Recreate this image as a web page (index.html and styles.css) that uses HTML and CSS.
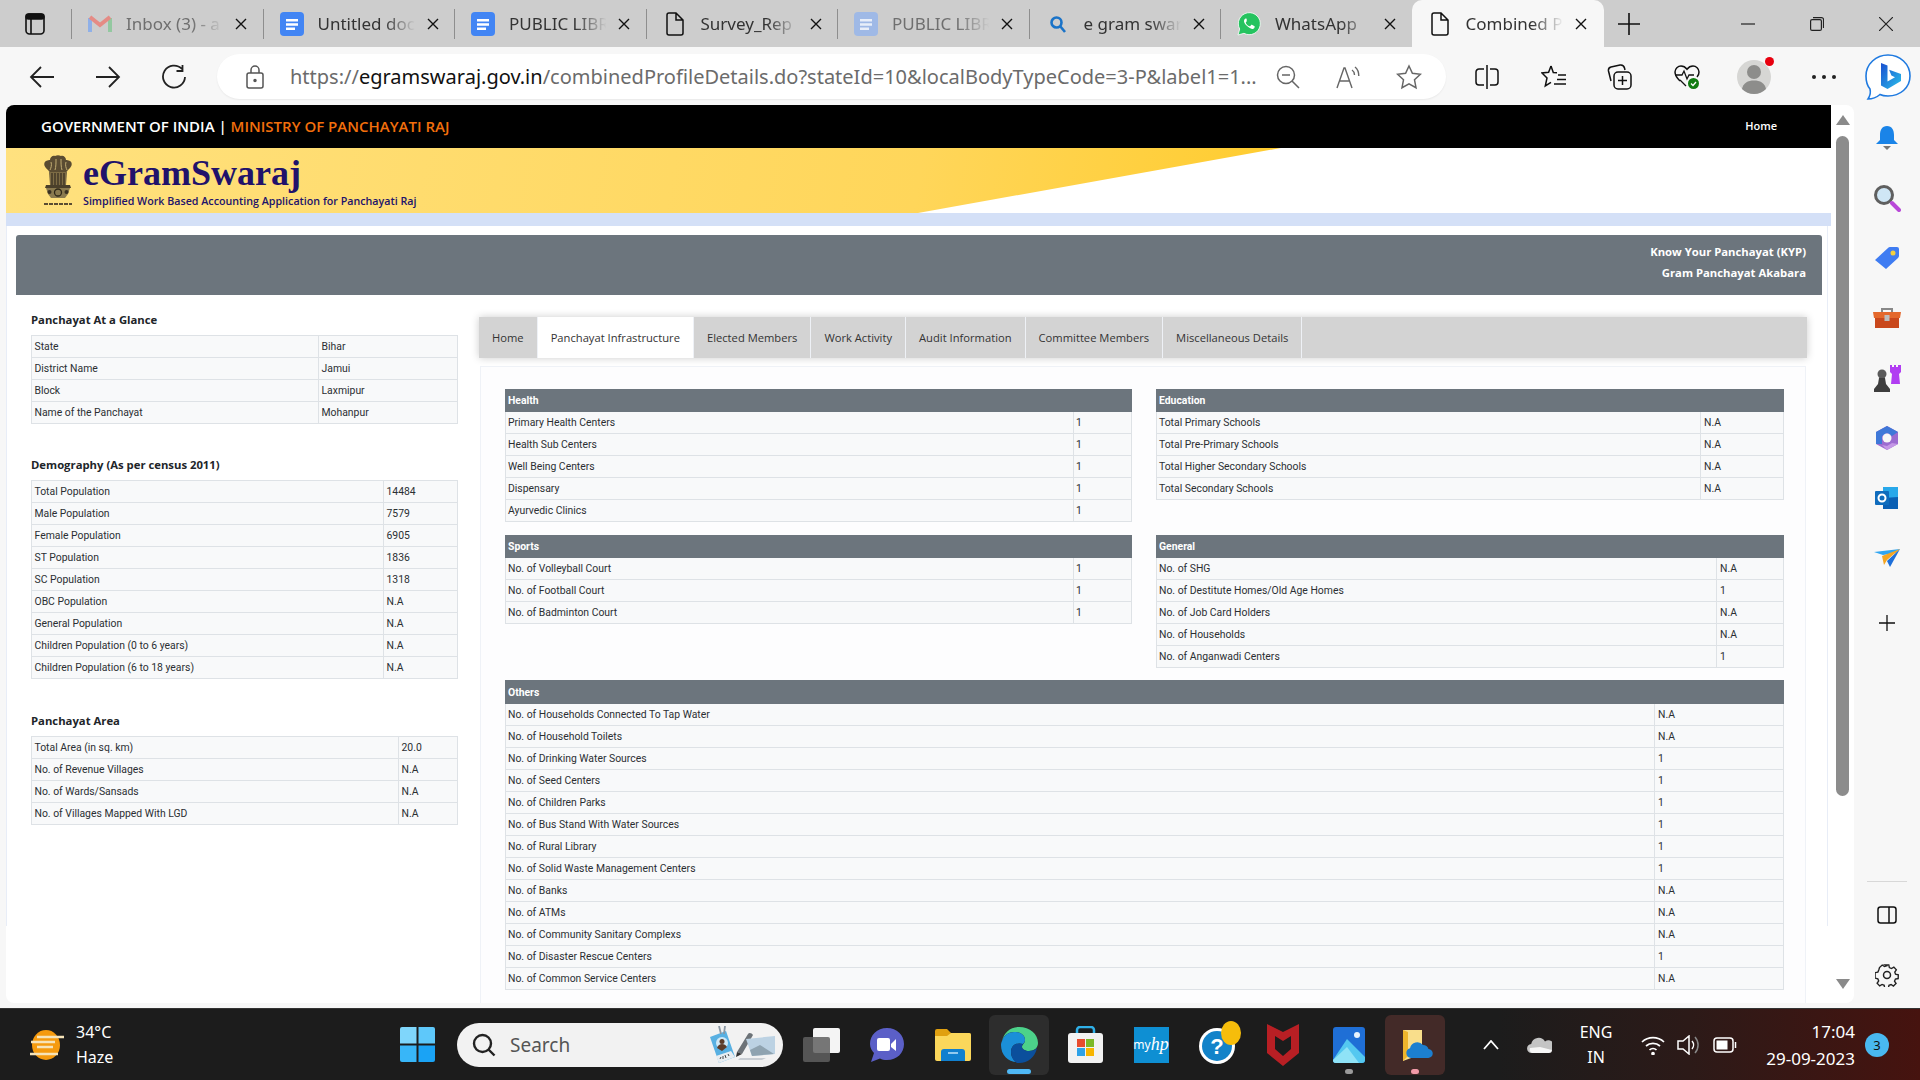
FILE: index.html
```html
<!DOCTYPE html>
<html lang="en">

<head>
    <meta charset="UTF-8">
    <meta name="viewport" content="width=device-width, initial-scale=1.0">
    <title>Combined Profile</title>
    <link rel="icon" href="data:,">
    <link rel="stylesheet" href="styles.css">
</head>

<body>
    <!-- browser tabs -->
    <div class="tabbar">
        <div class="tab-sidebtn">
            <svg width="20" height="24" viewBox="0 0 20 24" fill="none" stroke="#111" stroke-width="1.6"><rect x="1" y="2" width="18" height="20" rx="3.5"/><rect x="1" y="2" width="18" height="5" rx="2.5" fill="#111"/><path d="M6 7v15"/></svg>
        </div>
        <div class="tabs">
            <div class="tab tab-dim">
                <span class="favicon"><svg width="24" height="20" viewBox="0 0 24 20" fill="none"><path d="M2 18V4" stroke="#8fb0e8" stroke-width="4"/><path d="M22 18V4" stroke="#93c8a0" stroke-width="4"/><path d="M2 3l10 8 10-8" stroke="#e58b85" stroke-width="4"/></svg></span>
                <span class="tab-title">Inbox (3) - a</span>
                <svg class="tab-close" viewBox="0 0 12 12"><path d="M1 1l10 10M11 1L1 11"/></svg>
            </div>
            <div class="tab">
                <span class="favicon"><svg width="24" height="24" viewBox="0 0 24 24"><rect width="24" height="24" rx="4" fill="#4285f4"/><path d="M6 7h12v2.5H6zM6 11.2h12v2.5H6zM6 15.4h9v2.5H6z" fill="#fff"/></svg></span>
                <span class="tab-title">Untitled doc</span>
                <svg class="tab-close" viewBox="0 0 12 12"><path d="M1 1l10 10M11 1L1 11"/></svg>
            </div>
            <div class="tab">
                <span class="favicon"><svg width="24" height="24" viewBox="0 0 24 24"><rect width="24" height="24" rx="4" fill="#4285f4"/><path d="M6 7h12v2.5H6zM6 11.2h12v2.5H6zM6 15.4h9v2.5H6z" fill="#fff"/></svg></span>
                <span class="tab-title">PUBLIC LIBR</span>
                <svg class="tab-close" viewBox="0 0 12 12"><path d="M1 1l10 10M11 1L1 11"/></svg>
            </div>
            <div class="tab">
                <span class="favicon"><svg width="18" height="24" viewBox="0 0 18 24" fill="none" stroke="#111" stroke-width="1.5"><path d="M1 3a2 2 0 0 1 2-2h7l7 7v13a2 2 0 0 1-2 2H3a2 2 0 0 1-2-2zM10 1v7h7"/></svg></span>
                <span class="tab-title">Survey_Rep</span>
                <svg class="tab-close" viewBox="0 0 12 12"><path d="M1 1l10 10M11 1L1 11"/></svg>
            </div>
            <div class="tab tab-dim">
                <span class="favicon"><svg width="24" height="24" viewBox="0 0 24 24"><rect width="24" height="24" rx="4" fill="#9fb9e6"/><path d="M6 7h12v2.5H6zM6 11.2h12v2.5H6zM6 15.4h9v2.5H6z" fill="#e8eef9"/></svg></span>
                <span class="tab-title">PUBLIC LIBR</span>
                <svg class="tab-close" viewBox="0 0 12 12"><path d="M1 1l10 10M11 1L1 11"/></svg>
            </div>
            <div class="tab">
                <span class="favicon"><svg width="18" height="18" viewBox="0 0 18 18" fill="none" stroke="#1a73c8" stroke-width="2.6"><circle cx="7.5" cy="7.5" r="5"/><path d="M11 11l5 6"/></svg></span>
                <span class="tab-title">e gram swar</span>
                <svg class="tab-close" viewBox="0 0 12 12"><path d="M1 1l10 10M11 1L1 11"/></svg>
            </div>
            <div class="tab">
                <span class="favicon"><svg width="24" height="24" viewBox="0 0 24 24"><path d="M1 23l1.7-6A11 11 0 1 1 7 21.3z" fill="#25c35f" stroke="#fff" stroke-width=".8"/><path d="M8.6 6.6c-.5 0-1.6 1-1.6 2.600s1.700 3.700 3.700 5.400 4 2.500 5 2.300 2-1.200 2-2-.1-.8-.5-1l-2.300-1.100c-.4-.1-.6 0-.8.300l-.9 1.100c-.2.200-.4.200-.7.100-1.800-.8-3-2.100-3.700-3.400-.1-.3 0-.5.200-.7l.7-.9c.1-.2.200-.4 0-.7L9.700 7c-.2-.4-.6-.4-1.100-.4z" fill="#fff"/></svg></span>
                <span class="tab-title">WhatsApp</span>
                <svg class="tab-close" viewBox="0 0 12 12"><path d="M1 1l10 10M11 1L1 11"/></svg>
            </div>
            <div class="tab tab-active">
                <span class="favicon"><svg width="18" height="24" viewBox="0 0 18 24" fill="none" stroke="#111" stroke-width="1.5"><path d="M1 3a2 2 0 0 1 2-2h7l7 7v13a2 2 0 0 1-2 2H3a2 2 0 0 1-2-2zM10 1v7h7"/></svg></span>
                <span class="tab-title">Combined P</span>
                <svg class="tab-close" viewBox="0 0 12 12"><path d="M1 1l10 10M11 1L1 11"/></svg>
            </div>
        </div>
        <svg class="tab-new" width="22" height="22" viewBox="0 0 22 22" stroke="#111" stroke-width="1.6"><path d="M11 0v22M0 11h22"/></svg>
        <div class="winbtns">
            <svg width="14" height="14" viewBox="0 0 14 14" stroke="#222" stroke-width="1.2"><path d="M0 7h14"/></svg>
            <svg width="14" height="14" viewBox="0 0 14 14" fill="none" stroke="#222" stroke-width="1.2"><rect x=".6" y="2.600" width="10.800" height="10.800" rx="1.500"/><path d="M3 .6h8.500a2 2 0 0 1 2 2V11"/></svg>
            <svg width="14" height="14" viewBox="0 0 14 14" stroke="#222" stroke-width="1.2"><path d="M0 0l14 14M14 0L0 14"/></svg>
        </div>
    </div>

    <!-- address bar -->
    <div class="toolbar">
        <div class="navbtns">
            <div class="toolbtn"><svg width="26" height="24" viewBox="0 0 26 24" fill="none" stroke="#222" stroke-width="1.8"><path d="M25 12H2M12 2L2 12l10 10"/></svg></div>
            <div class="toolbtn"><svg width="26" height="24" viewBox="0 0 26 24" fill="none" stroke="#222" stroke-width="1.8"><path d="M1 12h23M14 2l10 10-10 10"/></svg></div>
            <div class="toolbtn"><svg width="26" height="26" viewBox="0 0 26 26" fill="none" stroke="#222" stroke-width="1.8"><path d="M21 5a11 11 0 1 0 3 8M21.500 1v6h-6"/></svg></div>
        </div>
        <div class="addressbar">
            <svg class="lock" width="18" height="24" viewBox="0 0 18 24" fill="none" stroke="#555" stroke-width="1.500"><rect x="1" y="8" width="16" height="15" rx="2"/><path d="M5 8V5a4 4 0 0 1 8 0v3"/><circle cx="9" cy="15.500" r="1" fill="#555"/></svg>
            <div class="url"><span>https://</span><b>egramswaraj.gov.in</b><span>/combinedProfileDetails.do?stateId=10&amp;localBodyTypeCode=3-P&amp;label1=1...</span></div>
            <svg class="addr-icon" width="24" height="24" viewBox="0 0 24 24" fill="none" stroke="#666" stroke-width="1.500"><circle cx="10" cy="10" r="8.500"/><path d="M6 10h8M16 16l7 7"/></svg>
            <svg class="addr-icon" width="24" height="24" viewBox="0 0 24 24" fill="none" stroke="#666" stroke-width="1.400"><path d="M1 23L8 3h1l7 20M4 16h10M16 5c1.500 1 2.500 3 2.500 5M19 2c2.500 2 3.800 5 3.800 9"/></svg>
            <svg class="addr-icon" width="26" height="26" viewBox="0 0 26 26" fill="none" stroke="#666" stroke-width="1.500"><path d="M13 2l3.400 7.300 8 1-5.900 5.500 1.500 7.900-7-3.900-7 3.900 1.500-7.900L1.600 10.300l8-1z"/></svg>
        </div>
        <div class="toolbtns">
            <div class="toolbtn"><svg width="24" height="24" viewBox="0 0 24 24" fill="none" stroke="#111" stroke-width="1.500"><path d="M12 0v24M9 4H4a3 3 0 0 0-3 3v10a3 3 0 0 0 3 3h5M15 4h5a3 3 0 0 1 3 3v10a3 3 0 0 1-3 3h-5"/></svg></div>
            <div class="toolbtn"><svg width="26" height="26" viewBox="0 0 26 26" fill="none" stroke="#111" stroke-width="1.500"><path d="M10 2l2.300 6.500 3.700.3M10 2L7.600 8.300 1 9l5 5-1.700 8 5.700-3.600M17 11h8M16 15.500h9M13 20h12"/></svg></div>
            <div class="toolbtn"><svg width="26" height="26" viewBox="0 0 26 26" fill="none" stroke="#111" stroke-width="1.500"><path d="M4 17L1.500 7A3.500 3.500 0 0 1 4 3l9-2a4 4 0 0 1 4.500 3l.5 2"/><rect x="7" y="8" width="17" height="17" rx="4"/><path d="M15.500 12v9M11 16.500h9"/></svg></div>
            <div class="toolbtn"><svg width="26" height="26" viewBox="0 0 26 26" fill="none"><path d="M6 17C3 14 1 12 1 8c0-3.500 3-6 6-6 2.600 0 4.500 1.300 6 3.200C14.500 3.300 16.400 2 19 2c3 0 6 2.500 6 6 0 2-1 4-2 5" stroke="#111" stroke-width="1.500"/><path d="M1 11h7l2-4 3 8 2-4h5M6 16l6 6" stroke="#111" stroke-width="1.300"/><circle cx="19.500" cy="19.500" r="5.500" fill="#107c10"/><path d="M17 19.500l2 2 3-3.500" stroke="#fff" stroke-width="1.300"/></svg></div>
            <div class="toolbtn avatar-btn">
                <span class="avatar"><svg width="34" height="34" viewBox="0 0 34 34"><circle cx="17" cy="17" r="17" fill="#d6d6d4"/><circle cx="17" cy="12" r="7" fill="#8d8d8b"/><path d="M5 29c1-6 6-8.500 12-8.500S28 23 29 29a17 17 0 0 1-24 0z" fill="#8d8d8b"/></svg></span>
                <span class="avatar-dot"></span>
            </div>
            <div class="toolbtn dots"><svg width="24" height="4" viewBox="0 0 24 4" fill="#222"><circle cx="2" cy="2" r="2"/><circle cx="12" cy="2" r="2"/><circle cx="22" cy="2" r="2"/></svg></div>
        </div>
        <svg class="bing" width="46" height="46" viewBox="0 0 46 46">
            <defs>
                <linearGradient id="bingB" x1="0" y1="0" x2="1" y2="1"><stop offset="0" stop-color="#1a4fd0"/><stop offset="1" stop-color="#2bc0ea"/></linearGradient>
            </defs>
            <path d="M23 1c12 0 22 9 22 21s-10 20-22 20c-3 0-6-.5-8-1.500C12 43 8 45 3 45c2-3 3-6 2-10-3-3.500-4-8-4-13C1 10 11 1 23 1z" fill="#fff" stroke="#1f7ae0" stroke-width="1.600"/>
            <path d="M16 9l6.500 2.400v16l7.500-4.200-3.600-1.800-2.300-5.600L36 20v7L22.500 35 16 31.500z" fill="url(#bingB)"/>
        </svg>
    </div>

    <div class="workspace">
        <div class="browserpage">
            <div class="sitecontent">
                <div class="govbar">
                    <div><span class="gov-white">GOVERNMENT OF INDIA | </span><span class="gov-orange">MINISTRY OF PANCHAYATI RAJ</span></div>
                    <a class="gov-home">Home</a>
                </div>
                <div class="banner">
                    <svg class="emblem" width="30" height="51" viewBox="0 0 30 51">
                        <path d="M5 15C1 12 0 8 3 6c2-1 3-1 4-1 0-3 3-5 5-4 2-1 4-1 6 0 2-1 5 1 5 4 1 0 2 0 4 1 3 2 2 6-2 9-1 1-1 2-2 2H7c-1 0-1-1-2-2z" fill="#5a4c32"/>
                        <path d="M8 7c1 3 0 6-1 8M13 4c0 4 0 8-1 11M18 4c0 4 0 8 1 11M23 7c-1 3 0 6 1 8" stroke="#c2ad72" fill="none"/>
                        <path d="M6 17h18v1l-1 12H7L6 18z" fill="#7d6c45"/>
                        <path d="M9 18v12M12 18v12M15 18v12M18 18v12M21 18v12" stroke="#3a3122" stroke-width="1.300"/>
                        <path d="M3 30h24l1 3H2z" fill="#4a3f2a"/>
                        <path d="M3 33h24l-2 6-3 4H8l-3-4z" fill="#8a7a4f"/>
                        <circle cx="15" cy="37.500" r="3.500" fill="none" stroke="#2f2818" stroke-width="1.300"/>
                        <circle cx="6.500" cy="37" r="2" fill="#3a3122"/>
                        <circle cx="23.500" cy="37" r="2" fill="#3a3122"/>
                        <path d="M1 49h28" stroke="#5a4c32" stroke-width="2" stroke-dasharray="4 1"/>
                    </svg>
                    <div class="brand">
                        <div class="brand-name">eGramSwaraj</div>
                        <div class="brand-sub">Simplified Work Based Accounting Application for Panchayati Raj</div>
                    </div>
                </div>
                <div class="band"></div>

                <div class="kyp">
                    <div class="kyp-head">
                        <div>Know Your Panchayat (KYP)</div>
                        <div>Gram Panchayat Akabara</div>
                    </div>
                    <div class="kyp-body">
                        <div class="kyp-left">
                            <h4 class="side-title">Panchayat At a Glance</h4>
                            <table class="data">
                                <colgroup><col><col class="col-glance"></colgroup>
                                <tr><td>State</td><td>Bihar</td></tr>
                                <tr><td>District Name</td><td>Jamui</td></tr>
                                <tr><td>Block</td><td>Laxmipur</td></tr>
                                <tr><td>Name of the Panchayat</td><td>Mohanpur</td></tr>
                            </table>
                            <h4 class="side-title">Demography (As per census 2011)</h4>
                            <table class="data">
                                <colgroup><col><col class="col-demo"></colgroup>
                                <tr><td>Total Population</td><td>14484</td></tr>
                                <tr><td>Male Population</td><td>7579</td></tr>
                                <tr><td>Female Population</td><td>6905</td></tr>
                                <tr><td>ST Population</td><td>1836</td></tr>
                                <tr><td>SC Population</td><td>1318</td></tr>
                                <tr><td>OBC Population</td><td>N.A</td></tr>
                                <tr><td>General Population</td><td>N.A</td></tr>
                                <tr><td>Children Population (0 to 6 years)</td><td>N.A</td></tr>
                                <tr><td>Children Population (6 to 18 years)</td><td>N.A</td></tr>
                            </table>
                            <h4 class="side-title side-title-area">Panchayat Area</h4>
                            <table class="data">
                                <colgroup><col><col class="col-area"></colgroup>
                                <tr><td>Total Area (in sq. km)</td><td>20.0</td></tr>
                                <tr><td>No. of Revenue Villages</td><td>N.A</td></tr>
                                <tr><td>No. of Wards/Sansads</td><td>N.A</td></tr>
                                <tr><td>No. of Villages Mapped With LGD</td><td>N.A</td></tr>
                            </table>
                        </div>
                        <div class="kyp-right">
                            <div class="pagetabs">
                                <a>Home</a>
                                <a class="active">Panchayat Infrastructure</a>
                                <a>Elected Members</a>
                                <a>Work Activity</a>
                                <a>Audit Information</a>
                                <a>Committee Members</a>
                                <a>Miscellaneous Details</a>
                            </div>
                            <div class="infra">
                                <table class="data">
                                    <colgroup><col><col class="col-health"></colgroup>
                                    <tr><th colspan="2">Health</th></tr>
                                    <tr><td>Primary Health Centers</td><td>1</td></tr>
                                    <tr><td>Health Sub Centers</td><td>1</td></tr>
                                    <tr><td>Well Being Centers</td><td>1</td></tr>
                                    <tr><td>Dispensary</td><td>1</td></tr>
                                    <tr><td>Ayurvedic Clinics</td><td>1</td></tr>
                                </table>
                                <table class="data">
                                    <colgroup><col><col class="col-edu"></colgroup>
                                    <tr><th colspan="2">Education</th></tr>
                                    <tr><td>Total Primary Schools</td><td>N.A</td></tr>
                                    <tr><td>Total Pre-Primary Schools</td><td>N.A</td></tr>
                                    <tr><td>Total Higher Secondary Schools</td><td>N.A</td></tr>
                                    <tr><td>Total Secondary Schools</td><td>N.A</td></tr>
                                </table>
                                <table class="data">
                                    <colgroup><col><col class="col-health"></colgroup>
                                    <tr><th colspan="2">Sports</th></tr>
                                    <tr><td>No. of Volleyball Court</td><td>1</td></tr>
                                    <tr><td>No. of Football Court</td><td>1</td></tr>
                                    <tr><td>No. of Badminton Court</td><td>1</td></tr>
                                </table>
                                <table class="data">
                                    <colgroup><col><col class="col-general"></colgroup>
                                    <tr><th colspan="2">General</th></tr>
                                    <tr><td>No. of SHG</td><td>N.A</td></tr>
                                    <tr><td>No. of Destitute Homes/Old Age Homes</td><td>1</td></tr>
                                    <tr><td>No. of Job Card Holders</td><td>N.A</td></tr>
                                    <tr><td>No. of Households</td><td>N.A</td></tr>
                                    <tr><td>No. of Anganwadi Centers</td><td>1</td></tr>
                                </table>
                                <table class="data infra-others">
                                    <colgroup><col><col class="col-others"></colgroup>
                                    <tr><th colspan="2">Others</th></tr>
                                    <tr><td>No. of Households Connected To Tap Water</td><td>N.A</td></tr>
                                    <tr><td>No. of Household Toilets</td><td>N.A</td></tr>
                                    <tr><td>No. of Drinking Water Sources</td><td>1</td></tr>
                                    <tr><td>No. of Seed Centers</td><td>1</td></tr>
                                    <tr><td>No. of Children Parks</td><td>1</td></tr>
                                    <tr><td>No. of Bus Stand With Water Sources</td><td>1</td></tr>
                                    <tr><td>No. of Rural Library</td><td>1</td></tr>
                                    <tr><td>No. of Solid Waste Management Centers</td><td>1</td></tr>
                                    <tr><td>No. of Banks</td><td>N.A</td></tr>
                                    <tr><td>No. of ATMs</td><td>N.A</td></tr>
                                    <tr><td>No. of Community Sanitary Complexs</td><td>N.A</td></tr>
                                    <tr><td>No. of Disaster Rescue Centers</td><td>1</td></tr>
                                    <tr><td>No. of Common Service Centers</td><td>N.A</td></tr>
                                </table>
                            </div>
                        </div>
                    </div>
                </div>
            </div>
            <div class="pagescroll">
                <span class="arrow-up"></span>
                <span class="scroll-thumb"></span>
                <span class="arrow-down"></span>
            </div>
        </div>

        <!-- edge sidebar -->
        <div class="rail">
            <div class="rail-top">
                <svg width="24" height="26" viewBox="0 0 24 26"><path d="M12 1c5 0 7 4 7 9v5l4 4H1l4-4v-5c0-5 2-9 7-9z" fill="#1a84e8"/><path d="M8 21h8l-4 4z" fill="#777"/></svg>
                <svg width="28" height="28" viewBox="0 0 28 28" fill="none"><circle cx="11" cy="11" r="8.500" fill="#cfe6f5" stroke="#5f5f5f" stroke-width="3"/><path d="M19 19l7 7" stroke="#b848d8" stroke-width="4" stroke-linecap="round"/></svg>
                <svg width="26" height="24" viewBox="0 0 26 24"><path d="M1 14L14 2a3 3 0 0 1 2-1h7a2 2 0 0 1 2 2v7a3 3 0 0 1-1 2L12 23z" fill="#3f7cf2"/><circle cx="19" cy="7" r="2.500" fill="#f4d03f"/></svg>
                <svg width="28" height="22" viewBox="0 0 28 22" fill="none"><path d="M9 5V2h10v3" stroke="#888" stroke-width="2"/><path d="M0 5h28l-1 6H1z" fill="#e4682c"/><path d="M2 11h24v10H2z" fill="#c9481c"/><rect x="11.500" y="8" width="5" height="6" fill="#bdbdbd"/></svg>
                <svg width="28" height="28" viewBox="0 0 28 28"><path d="M17 1h2v2h2V1h2v2h2V1h3v7l-2 2 1 10h-9l1-10-2-2z" fill="#b13df2"/><circle cx="9" cy="10" r="4.500" fill="#5a5a5a"/><path d="M6 14h6l1 6 4 5v3H1v-3l4-5z" fill="#3d3d3d"/></svg>
                <svg width="24" height="26" viewBox="0 0 24 26"><path d="M12 1l11 6v12l-11 6L1 19V7z" fill="#9c6bd0"/><path d="M12 1l11 6-6 4-5-3-5 3v8L1 19V7z" fill="#3f78d8"/><path d="M23 19l-11 6-5-5 5 1 5-3z" fill="#c497e6"/><circle cx="12" cy="13" r="4.500" fill="#f7f7f7"/></svg>
                <svg width="24" height="24" viewBox="0 0 24 24"><path d="M8 1h15v22H8z" fill="#28a8ea"/><path d="M8 12l15-1v12H8z" fill="#0a5fb4"/><rect y="5" width="14" height="14" rx="1" fill="#0f6cbd"/><circle cx="7" cy="12" r="3.500" fill="none" stroke="#fff" stroke-width="2"/></svg>
                <svg width="26" height="18" viewBox="0 0 26 18"><path d="M0 3l26-3-4 4L9 6z" fill="#2fa5f2"/><path d="M26 0L16 18l-3-6z" fill="#1e6fd9"/><path d="M26 0L8 7l2 9 3-5z" fill="#f5a623"/></svg>
                <svg class="rail-plus" width="16" height="16" viewBox="0 0 16 16" stroke="#111" stroke-width="1.300"><path d="M8 0v16M0 8h16"/></svg>
            </div>
            <div class="rail-bottom">
                <svg width="20" height="18" viewBox="0 0 20 18" fill="none" stroke="#111" stroke-width="1.500"><rect x="1" y="1" width="18" height="16" rx="2.500"/><path d="M12 1v16"/></svg>
                <svg width="24" height="24" viewBox="0 0 24 24" fill="none" stroke="#222" stroke-width="1.500"><circle cx="12" cy="12" r="3.500"/><path d="M10 1.500h4l.6 3 2.300 1 2.600-1.600 2.700 3-1.700 2.500.8 2.300 3 .7-.1 4-3 .5-1 2.300 1.700 2.600-2.900 2.800-2.500-1.700-2.300.9-.7 3h-4l-.5-3-2.300-1-2.600 1.600-2.800-2.900 1.700-2.500-.9-2.300-3-.7V10l3-.6 1-2.300L3.900 4.500l2.900-2.800 2.500 1.700 2.300-.9z" transform="scale(.92) translate(1 .5)"/></svg>
            </div>
        </div>
    </div>

    <!-- windows taskbar -->
    <div class="taskbar">
        <div class="weather">
            <svg width="36" height="32" viewBox="0 0 36 32"><ellipse cx="17" cy="16" rx="14" ry="15" fill="#f59a0e"/><path d="M8 8h27M2 13h24M8 18h16M1 25h28" stroke="#f6e3b8" stroke-width="2.500"/></svg>
            <div class="weather-text"><div>34°C</div><div>Haze</div></div>
        </div>
        <div class="startbtn">
            <svg width="35" height="35" viewBox="0 0 35 35"><path d="M0 2a2 2 0 0 1 2-2h14.500v16.500H0z" fill="#7fd6fb"/><path d="M18.500 0H33a2 2 0 0 1 2 2v14.500H18.500z" fill="#5ec8fa"/><path d="M0 18.500h16.500V35H2a2 2 0 0 1-2-2z" fill="#38b6f8"/><path d="M18.500 18.500H35V33a2 2 0 0 1-2 2H18.500z" fill="#1aa3f5"/></svg>
        </div>
        <div class="tasksearch">
            <svg width="24" height="24" viewBox="0 0 24 24" fill="none" stroke="#222" stroke-width="2.400"><circle cx="10.500" cy="10.500" r="8.500"/><path d="M16.500 16.500l6 6"/></svg>
            <span class="tasksearch-label">Search</span>
            <svg class="tasksearch-art" width="66" height="38" viewBox="0 0 66 38">
                <path d="M0 11l16-6 9 26-16 6z" fill="#58b0e2"/>
                <path d="M6 30l15-5 4 6-16 6z" fill="#e8edf1"/>
                <circle cx="12" cy="17" r="6" fill="#cfe8f6"/>
                <circle cx="12" cy="15.500" r="2.500" fill="#5c3b28"/>
                <path d="M7 22c1-3 3-4 5-4s4 1 5 3l-5 4z" fill="#5c3b28"/>
                <path d="M9 0l2 8M15 0l-1 8" stroke="#8a97a3" stroke-width="1.800"/>
                <path d="M10 33l1-2M13 33l0-3M16 32l-1-3M19 30l-1-2" stroke="#444"/>
                <path d="M27 26l11-18c1-2 4-1 5 1L32 28z" fill="#6d7378"/>
                <path d="M27 26l5 2-6 3z" fill="#333"/>
                <path d="M36 13l29-3v18l-23 2z" fill="#bcd2e3"/>
                <path d="M40 24l10-5 14 9-22 2z" fill="#8fa3b0"/>
                <path d="M30 32h26l-4 2H28z" fill="#c9ced3"/>
            </svg>
        </div>
        <div class="taskapps">
            <div class="taskapp">
                <svg width="37" height="34" viewBox="0 0 37 34"><rect x="10" y="0" width="27" height="25" rx="2" fill="#f4f4f4"/><rect x="0" y="9" width="27" height="25" rx="2" fill="#5f5f5f" fill-opacity=".85"/></svg>
            </div>
            <div class="taskapp">
                <svg width="34" height="34" viewBox="0 0 34 34"><path d="M17 0c10 0 17 7 17 16s-7 16-17 16c-3 0-5-.5-7-1.500L1 34l3-9C2 23 0 20 0 16 0 7 7 0 17 0z" fill="#5b5fc7"/><rect x="7" y="10" width="13" height="13" rx="2" fill="#fff"/><path d="M21 16l5-5v12l-5-4z" fill="#fff"/></svg>
            </div>
            <div class="taskapp">
                <svg width="36" height="33" viewBox="0 0 36 33"><path d="M0 3a2 2 0 0 1 2-2h10l4 4h18a2 2 0 0 1 2 2v23a2 2 0 0 1-2 2H2a2 2 0 0 1-2-2z" fill="#e0a010"/><path d="M0 8h12l4-3h18a2 2 0 0 1 2 2v24a2 2 0 0 1-2 2H2a2 2 0 0 1-2-2z" fill="#fbd75b"/><path d="M6 24a3 3 0 0 1 3-3h18a3 3 0 0 1 3 3v9H6z" fill="#1180cf"/><path d="M13 25h10" stroke="#bfe3fa" stroke-width="1.500"/></svg>
            </div>
            <div class="taskapp taskapp-edge">
                <svg width="37" height="36" viewBox="0 0 37 36"><path d="M18 0c11 0 19 7 19 16 0 5-4 8-9 8-4 0-7-2-7-4 0-3 3-3 3-7 0-5-5-8-11-8C8 5 3 8 1 14 3 6 9 0 18 0z" fill="#4cd28a"/><path d="M1 14C3 8 8 5 13 5c6 0 11 3 11 8 0 2-1 3-2 4-6-2-12 1-12 8 0 4 2 8 6 10C7 35 0 28 0 18c0-1 .4-3 1-4z" fill="#1b8fd8"/><path d="M10 25c0-7 6-10 12-8-1 1-1 2-1 3 0 2 3 4 7 4 3 0 6-1 8-3-2 9-9 15-18 15h-2c-4-2-6-7-6-11z" fill="#0b4f9c"/></svg>
                <span class="taskapp-line"></span>
            </div>
            <div class="taskapp">
                <svg width="35" height="38" viewBox="0 0 35 38" fill="none"><path d="M9 8V4a3 3 0 0 1 3-3h11a3 3 0 0 1 3 3v4" stroke="#2fb0e8" stroke-width="2.500"/><rect y="7" width="35" height="30" rx="3" fill="#f2f2f2"/><rect x="9" y="13" width="8" height="8" fill="#e74c2e"/><rect x="18" y="13" width="8" height="8" fill="#7cb928"/><rect x="9" y="22" width="8" height="8" fill="#2ea2e8"/><rect x="18" y="22" width="8" height="8" fill="#f7b500"/></svg>
            </div>
            <div class="taskapp">
                <span class="myhp">my<i>hp</i></span>
            </div>
            <div class="taskapp">
                <svg class="help-icon" width="48" height="48" viewBox="0 0 48 48"><circle cx="24" cy="25" r="18" fill="#fff"/><circle cx="24" cy="25" r="15" fill="#1283c9"/><text x="24" y="33" class="help-mark">?</text><ellipse cx="38" cy="12" rx="10" ry="12" fill="#f6bd0b"/></svg>
            </div>
            <div class="taskapp">
                <svg width="32" height="42" viewBox="0 0 32 42"><path d="M0 0l16 8 16-8v29L16 42 0 29z" fill="#b81f24"/><path d="M8 12l8 5 8-5v13l-8 7-8-7z" fill="#1c1c1c"/></svg>
            </div>
            <div class="taskapp">
                <svg width="32" height="36" viewBox="0 0 32 36"><rect width="32" height="36" rx="3" fill="#1f6fd6"/><path d="M0 33L14 12l18 18v3a3 3 0 0 1-3 3H3a3 3 0 0 1-3-3z" fill="#54c8f0"/><path d="M0 33l14-13 12 16H3a3 3 0 0 1-3-3z" fill="#8fe3f7"/><circle cx="24" cy="8" r="3" fill="#e8f4fd"/></svg>
                <span class="taskapp-dot"></span>
            </div>
            <div class="taskapp taskapp-open">
                <svg width="36" height="36" viewBox="0 0 36 36"><path d="M6 3h19v24L6 34z" fill="#f9de8b"/><path d="M6 3l5 2v24l-5 5z" fill="#eeb52c"/><path d="M14 31a5 5 0 0 1-1-9.800 7.500 7.500 0 0 1 13-3.200 6 6 0 0 1 5.500 4A4.500 4.500 0 0 1 31 31z" fill="#1c7fd0"/></svg>
                <span class="taskapp-dot taskapp-dot-pink"></span>
            </div>
        </div>
        <div class="tray">
            <svg class="tray-chev" width="16" height="10" viewBox="0 0 16 10" fill="none" stroke="#fff" stroke-width="1.800"><path d="M1 9l7-8 7 8"/></svg>
            <svg class="tray-cloud" width="25" height="16" viewBox="0 0 25 16"><path d="M5 16a4.500 4.500 0 0 1-.8-9 7.500 7.500 0 0 1 13.800-2.500 5.500 5.500 0 0 1 7 8.500z" fill="#c4c4c4"/><path d="M5 16a4 4 0 0 1-2-5l10-1 12 3a3 3 0 0 1-3 3z" fill="#f6f6f6"/></svg>
            <div class="tray-lang"><div>ENG</div><div>IN</div></div>
            <svg class="tray-wifi" width="24" height="20" viewBox="0 0 24 20" fill="none" stroke="#fff" stroke-width="1.700"><path d="M1 7a16 16 0 0 1 22 0M5 11a10.500 10.500 0 0 1 14 0M8.500 15a5 5 0 0 1 7 0"/><circle cx="12" cy="18.500" r="1" fill="#fff"/></svg>
            <svg class="tray-sound" width="24" height="20" viewBox="0 0 24 20" fill="none" stroke="#fff" stroke-width="1.500"><path d="M1 6h5l6-5v18l-6-5H1zM15 6a6 6 0 0 1 0 8"/><path d="M18 2a12 12 0 0 1 0 16" stroke="#888"/></svg>
            <svg class="tray-batt" width="24" height="16" viewBox="0 0 24 16" fill="none" stroke="#fff" stroke-width="1.500"><rect x="1" y="1" width="19" height="14" rx="3"/><rect x="3.500" y="3.500" width="11" height="9" fill="#fff" stroke="none"/><path d="M22.500 5v6"/></svg>
            <div class="tray-clock"><div>17:04</div><div>29-09-2023</div></div>
            <span class="tray-badge">3</span>
        </div>
    </div>
</body>

</html>
```

FILE: styles.css
```css
* {
    box-sizing: border-box;
}

html,
body {
    margin: 0;
    height: 100%;
    overflow: hidden;
}

body {
    width: 1920px;
    height: 1080px;
    display: flex;
    flex-direction: column;
    background-color: #f7f7f7;
    font-family: "Open Sans", "Noto Sans", sans-serif;
}

/* tabs */
.tabbar {
    height: 47px;
    flex: none;
    display: flex;
    align-items: center;
    background-color: #cdcdcd;
}

.tab-sidebtn {
    width: 71px;
    display: flex;
    justify-content: center;
    padding-right: 1px;
}

.tabs {
    width: 1532px;
    height: 47px;
    display: flex;
    align-items: center;
}

.tab {
    width: 191.5px;
    height: 30px;
    flex: none;
    display: flex;
    align-items: center;
    padding-left: 16px;
    border-left: 1px solid #8e8e8e;
    color: #333;
    font-family: "Noto Sans", sans-serif;
    font-size: 17px;
}

.favicon {
    width: 24px;
    height: 24px;
    flex: none;
    display: flex;
    align-items: center;
    justify-content: center;
}

.tab-title {
    width: 106px;
    margin-left: 14px;
    white-space: nowrap;
    overflow: hidden;
    -webkit-mask-image: linear-gradient(90deg, #000 62%, transparent 92%);
    mask-image: linear-gradient(90deg, #000 62%, transparent 92%);
}

.tab-dim .tab-title {
    color: #6f6f6f;
}

.tab-close {
    width: 12px;
    height: 12px;
    flex: none;
    margin-left: 3px;
    fill: none;
    stroke: #111;
    stroke-width: 1.4;
}

.tab-active {
    width: 192px;
    height: 47px;
    align-self: flex-end;
    background-color: #f7f7f7;
    border-left: none;
    border-radius: 10px 10px 0 0;
}

.tab-new {
    margin-left: 15px;
}

.winbtns {
    margin-left: 101px;
    display: flex;
    gap: 55px;
}

/* address bar */
.toolbar {
    height: 58px;
    flex: none;
    display: flex;
    align-items: flex-start;
    padding: 7px 0 0 9px;
}

.navbtns {
    display: flex;
    width: 208px;
}

.toolbtn {
    width: 66px;
    height: 45px;
    flex: none;
    display: flex;
    align-items: center;
    justify-content: center;
}

.addressbar {
    width: 1229px;
    height: 45px;
    flex: none;
    display: flex;
    align-items: center;
    padding-left: 29px;
    background-color: #fff;
    border-radius: 23px;
    box-shadow: 0 1px 2px rgba(0, 0, 0, 0.06);
}

.lock {
    flex: none;
}

.url {
    width: 972px;
    flex: none;
    margin-left: 26px;
    margin-right: 14px;
    white-space: nowrap;
    overflow: hidden;
    font-family: "Noto Sans", sans-serif;
    font-size: 20px;
    color: #6b6b6b;
}

.url b {
    font-weight: 400;
    color: #111;
}

.addr-icon {
    flex: none;
}

.addr-icon + .addr-icon {
    margin-left: 36px;
}

.toolbtns {
    display: flex;
    margin-left: 8px;
}

.toolbtns .toolbtn {
    width: 66.5px;
}

.avatar-btn {
    position: relative;
}

.avatar {
    display: flex;
    margin-left: 2px;
}

.avatar-dot {
    position: absolute;
    top: 3px;
    left: 45px;
    width: 9px;
    height: 9px;
    border-radius: 50%;
    background-color: #e8000f;
}

.toolbtns .dots {
    margin-left: 4px;
}

.bing {
    flex: none;
    margin-left: 8px;
}

/* page area */
.workspace {
    height: 903px;
    flex: none;
    display: flex;
}

.browserpage {
    width: 1848px;
    height: 898px;
    margin-left: 6px;
    flex: none;
    display: flex;
    background-color: #fff;
    border-radius: 8px;
    overflow: hidden;
}

.sitecontent {
    width: 1825px;
    flex: none;
    overflow: hidden;
    color: #212529;
}

.govbar {
    height: 43px;
    display: flex;
    align-items: center;
    justify-content: space-between;
    padding: 0 54px 2px 35px;
    background-color: #000;
    font-size: 15px;
    font-weight: 600;
}

.gov-white {
    color: #fff;
}

.gov-orange {
    color: #f26f0c;
}

.gov-home {
    color: #fff;
    font-size: 11px;
    font-weight: 600;
}

.banner {
    height: 65px;
    display: flex;
    align-items: flex-start;
    padding: 7px 0 0 37px;
    background: linear-gradient(100deg, #ffe17f 0%, #ffd65a 50%, #ffcb2a 72%);
    clip-path: polygon(0 0, 1275px 0, 912px 100%, 0 100%);
}

.emblem {
    flex: none;
}

.brand {
    margin-left: 10px;
}

.brand-name {
    margin-top: -1px;
    font-family: "Liberation Serif", serif;
    font-size: 36px;
    font-weight: 700;
    line-height: 38px;
    color: #21126b;
}

.brand-sub {
    margin-top: 2px;
    font-size: 10.7px;
    font-weight: 600;
    color: #21126b;
    white-space: nowrap;
}

.band {
    height: 13px;
    background-color: #d4e0f7;
}

.kyp {
    height: 700px;
    margin-right: 3px;
    padding: 9px 5px 0 9px;
    background-color: #fff;
    border-left: 1px solid #e8edf7;
    border-right: 1px solid #e8edf7;
}

.kyp-head {
    height: 60px;
    padding: 6px 16px 0 0;
    background-color: #6c757d;
    border-radius: 3px 3px 0 0;
    color: #fff;
    font-size: 11.3px;
    font-weight: 700;
    line-height: 21px;
    text-align: right;
}

.kyp-body {
    display: flex;
    padding-left: 15px;
}

.kyp-left {
    width: 427px;
    flex: none;
    padding-top: 17px;
}

.side-title {
    margin: 33px 0 7px;
    font-size: 11.3px;
    font-weight: 700;
    line-height: 16px;
    color: #212529;
}

.side-title:first-child {
    margin-top: 0;
}

.side-title-area {
    margin-top: 34px;
}

.kyp-right {
    width: 1328px;
    flex: none;
    margin-left: 21px;
    padding-top: 22px;
}

.pagetabs {
    height: 41px;
    display: flex;
    background-color: #d3d3d3;
    box-shadow: 0 0 8px rgba(0, 0, 0, 0.2);
}

.pagetabs a {
    display: flex;
    align-items: center;
    padding: 0 13px;
    border-right: 1px solid #eef1f6;
    font-size: 11.2px;
    color: #333;
    white-space: nowrap;
}

.pagetabs a.active {
    background-color: #fff;
}

.infra {
    width: 1326px;
    margin: 8px 0 0 1px;
    padding: 22px 21px 40px 23.5px;
    display: grid;
    grid-template-columns: 627px 628px;
    column-gap: 24px;
    row-gap: 13px;
    align-items: start;
    background-color: #fdfdfe;
    border: 1px solid #eff2f7;
}

/* tables */
.data {
    width: 100%;
    table-layout: fixed;
    border-collapse: collapse;
    font-family: Roboto, "Open Sans", sans-serif;
    font-size: 10.4px;
    color: #2b2f33;
}

.data tr {
    height: 22px;
}

.data td,
.data th {
    padding: 0 2.5px;
    border: 1px solid #dee2e6;
    background-color: #f8f9fa;
    text-align: left;
    white-space: nowrap;
}

.data th {
    background-color: #6c757d;
    border-color: #6c757d;
    color: #fff;
    font-weight: 700;
}

.col-glance {
    width: 139px;
}

.col-demo {
    width: 74px;
}

.col-area {
    width: 59px;
}

.col-health {
    width: 58px;
}

.col-edu {
    width: 82px;
}

.col-general {
    width: 66px;
}

.col-others {
    width: 128px;
}

.infra-others {
    grid-column: 1 / span 2;
    margin-top: -1px;
}

.infra-others tr:first-child {
    height: 23px;
}

/* page scrollbar */
.pagescroll {
    width: 23px;
    flex: none;
    height: 100%;
    display: flex;
    flex-direction: column;
    align-items: center;
    padding-top: 10px;
}

.arrow-up {
    border-left: 7px solid transparent;
    border-right: 7px solid transparent;
    border-bottom: 10px solid #8a8a8a;
}

.scroll-thumb {
    width: 13px;
    height: 660px;
    margin-top: 11px;
    background-color: #8c8c8c;
    border-radius: 7px;
}

.arrow-down {
    margin-top: 183px;
    border-left: 7px solid transparent;
    border-right: 7px solid transparent;
    border-top: 10px solid #8a8a8a;
}

/* edge sidebar */
.rail {
    width: 66px;
    flex: none;
    height: 903px;
    display: flex;
    flex-direction: column;
    align-items: center;
    justify-content: space-between;
    padding-bottom: 21px;
}

.rail-top {
    display: grid;
    grid-auto-rows: 60px;
    place-items: center;
    padding-top: 3px;
}

.rail-plus {
    margin-top: 10px;
}

.rail-bottom {
    width: 40px;
    display: flex;
    flex-direction: column;
    align-items: center;
    gap: 39px;
    padding-top: 24px;
    border-top: 1px solid #d8d8d8;
}

/* taskbar */
.taskbar {
    height: 72px;
    flex: none;
    display: flex;
    align-items: center;
    background: linear-gradient(90deg, #1c1c1c 0%, #1c1c1c 78%, #2c1a18 88%, #46130f 100%);
    border-top: 1px solid #333;
    color: #fff;
    font-family: "Noto Sans", sans-serif;
}

.weather {
    width: 388px;
    flex: none;
    display: flex;
    align-items: center;
    padding-left: 29px;
}

.weather-text {
    margin-left: 11px;
    font-size: 16px;
    line-height: 25px;
}

.startbtn {
    width: 59px;
    flex: none;
    display: flex;
    justify-content: center;
}

.tasksearch {
    width: 326px;
    height: 44px;
    margin-left: 10px;
    flex: none;
    display: flex;
    align-items: center;
    padding: 0 7px 0 15px;
    background-color: #f2f2f2;
    border-radius: 22px;
    color: #555;
}

.tasksearch-label {
    margin-left: 14px;
    font-size: 19px;
}

.tasksearch-art {
    margin-left: auto;
}

.taskapps {
    margin-left: 5px;
    display: flex;
    align-items: center;
}

.taskapp {
    width: 66px;
    height: 60px;
    flex: none;
    position: relative;
    display: flex;
    align-items: center;
    justify-content: center;
    border-radius: 6px;
}

.taskapp-edge {
    width: 60px;
    margin: 0 3px;
    background-color: #2d2d2d;
}

.taskapp-open {
    width: 60px;
    margin: 0 3px;
    background-color: #432a28;
}

.taskapp-line {
    position: absolute;
    bottom: 1px;
    left: 18px;
    width: 24px;
    height: 5px;
    border-radius: 3px;
    background-color: #4fb8f5;
}

.taskapp-dot {
    position: absolute;
    bottom: 1px;
    left: 29px;
    width: 8px;
    height: 5px;
    border-radius: 3px;
    background-color: #9a9a9a;
}

.taskapp-dot-pink {
    left: 26px;
    background-color: #f29aa8;
}

.myhp {
    width: 35px;
    height: 36px;
    display: flex;
    align-items: center;
    justify-content: center;
    background-color: #0e8fd3;
    color: #fff;
    font-size: 12px;
}

.myhp i {
    font-family: "Liberation Serif", serif;
    font-size: 18px;
}

.help-mark {
    fill: #fff;
    font-family: "Liberation Sans", sans-serif;
    font-size: 22px;
    font-weight: 700;
    text-anchor: middle;
}

.tray {
    flex: 1;
    display: flex;
    align-items: center;
}

.tray-chev {
    margin-left: 35px;
}

.tray-cloud {
    margin-left: 28px;
}

.tray-lang {
    width: 50px;
    margin-left: 19px;
    text-align: center;
    font-size: 16px;
    line-height: 25px;
}

.tray-wifi {
    margin-left: 20px;
}

.tray-sound {
    margin-left: 12px;
}

.tray-batt {
    margin-left: 12px;
}

.tray-clock {
    width: 112px;
    margin-left: 6px;
    text-align: right;
    font-size: 17px;
    line-height: 27px;
}

.tray-badge {
    width: 24px;
    height: 24px;
    margin-left: 10px;
    display: flex;
    align-items: center;
    justify-content: center;
    border-radius: 50%;
    background-color: #49b8f0;
    color: #111;
    font-size: 13px;
}
```
